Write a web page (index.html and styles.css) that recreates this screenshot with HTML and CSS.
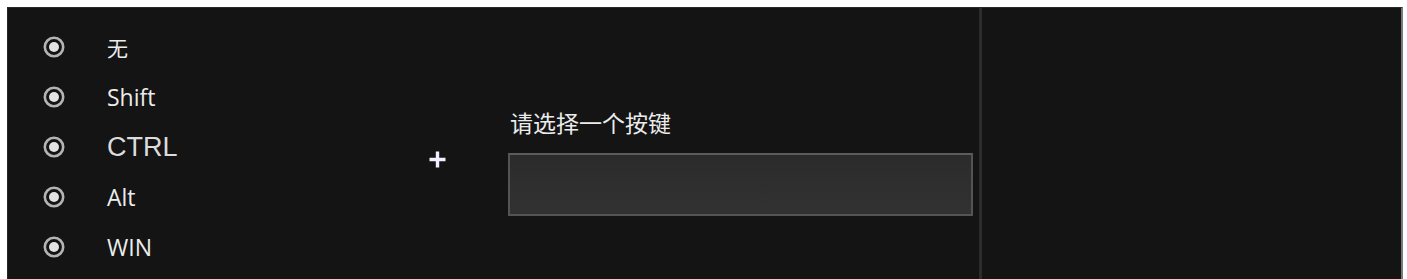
FILE: index.html
```html
<!DOCTYPE html>
<html lang="zh">
<head>
<meta charset="utf-8">
<title>按键设置</title>
<link rel="stylesheet" href="styles.css">
</head>
<body>
<div class="panel">
  <div class="main">
    <ul class="mods">
      <li class="mod"><svg class="radio" viewBox="0 0 24 24"><circle cx="12" cy="12" r="9.2" class="ring"/><circle cx="12" cy="12" r="5" class="dot"/></svg><span class="lbl cjk">无</span></li>
      <li class="mod"><svg class="radio" viewBox="0 0 24 24"><circle cx="12" cy="12" r="9.2" class="ring"/><circle cx="12" cy="12" r="5" class="dot"/></svg><span class="lbl">Shift</span></li>
      <li class="mod"><svg class="radio" viewBox="0 0 24 24"><circle cx="12" cy="12" r="9.2" class="ring"/><circle cx="12" cy="12" r="5" class="dot"/></svg><span class="lbl arial">CTRL</span></li>
      <li class="mod"><svg class="radio" viewBox="0 0 24 24"><circle cx="12" cy="12" r="9.2" class="ring"/><circle cx="12" cy="12" r="5" class="dot"/></svg><span class="lbl">Alt</span></li>
      <li class="mod"><svg class="radio" viewBox="0 0 24 24"><circle cx="12" cy="12" r="9.2" class="ring"/><circle cx="12" cy="12" r="5" class="dot"/></svg><span class="lbl">WIN</span></li>
    </ul>
    <div class="plus"><svg viewBox="0 0 19 19"><path d="M9.5 1.5v16M1.5 9.5h16"/></svg></div>
    <div class="keygroup">
      <div class="keylabel">请选择一个按键</div>
      <div class="keybox"></div>
    </div>
  </div>
  <div class="divider"></div>
  <div class="side"></div>
</div>
</body>
</html>
```
FILE: styles.css
```css
html, body {
  margin: 0;
  padding: 0;
  background: #ffffff;
  overflow: hidden;
}
body {
  height: 279px;
  padding: 7px 4px 0 7px;
  box-sizing: border-box;
}
.panel {
  display: flex;
  height: 272px;
  background: #141414;
  border-top: 1px solid #2a2a2a;
  border-left: 1px solid #262626;
  border-right: 2px solid #7a7a7a;
  box-sizing: border-box;
  color: #e8e8e8;
  font-family: "Open Sans", "Noto Sans CJK SC", sans-serif;
}
.main {
  width: 971px;
  display: flex;
  align-items: flex-start;
}
.mods {
  list-style: none;
  margin: 0;
  padding: 14px 0 0 34px;
  width: 420px;
  box-sizing: border-box;
}
.mod {
  display: flex;
  align-items: center;
  height: 50px;
}
.radio {
  width: 24px;
  height: 24px;
  filter: blur(0.7px);
}
.ring {
  fill: none;
  stroke: #b4b4b4;
  stroke-width: 2.6;
}
.dot {
  fill: #e4e4e4;
}
.lbl {
  margin-left: 41px;
  font-size: 23px;
  line-height: 30px;
  color: #ececec;
}
.cjk {
  font-family: "Noto Sans CJK SC", sans-serif;
  font-size: 21px;
}
.arial {
  font-family: "Liberation Sans", Arial, sans-serif;
  font-size: 27px;
  color: #dcdcdc;
}
.plus {
  width: 19px;
  height: 19px;
  margin-top: 142px;
}
.plus svg {
  display: block;
  width: 19px;
  height: 19px;
  filter: blur(0.4px);
}
.plus path {
  stroke: #f0f0ff;
  stroke-width: 3.4;
  fill: none;
}
.keygroup {
  margin-left: 61px;
  margin-top: 99px;
  width: 465px;
}
.keylabel {
  font-family: "Noto Sans CJK SC", sans-serif;
  font-size: 23px;
  line-height: 30px;
  color: #ececec;
  padding-left: 2px;
}
.keybox {
  margin-top: 16px;
  height: 63px;
  box-sizing: border-box;
  border: 2px solid #545454;
  border-top-color: #5c5c5c;
  background: linear-gradient(#2b2b2b, #323232);
}
.divider {
  width: 3px;
  background: #2c2c2c;
}
.side {
  flex: 1;
  background: #141414;
}
```
